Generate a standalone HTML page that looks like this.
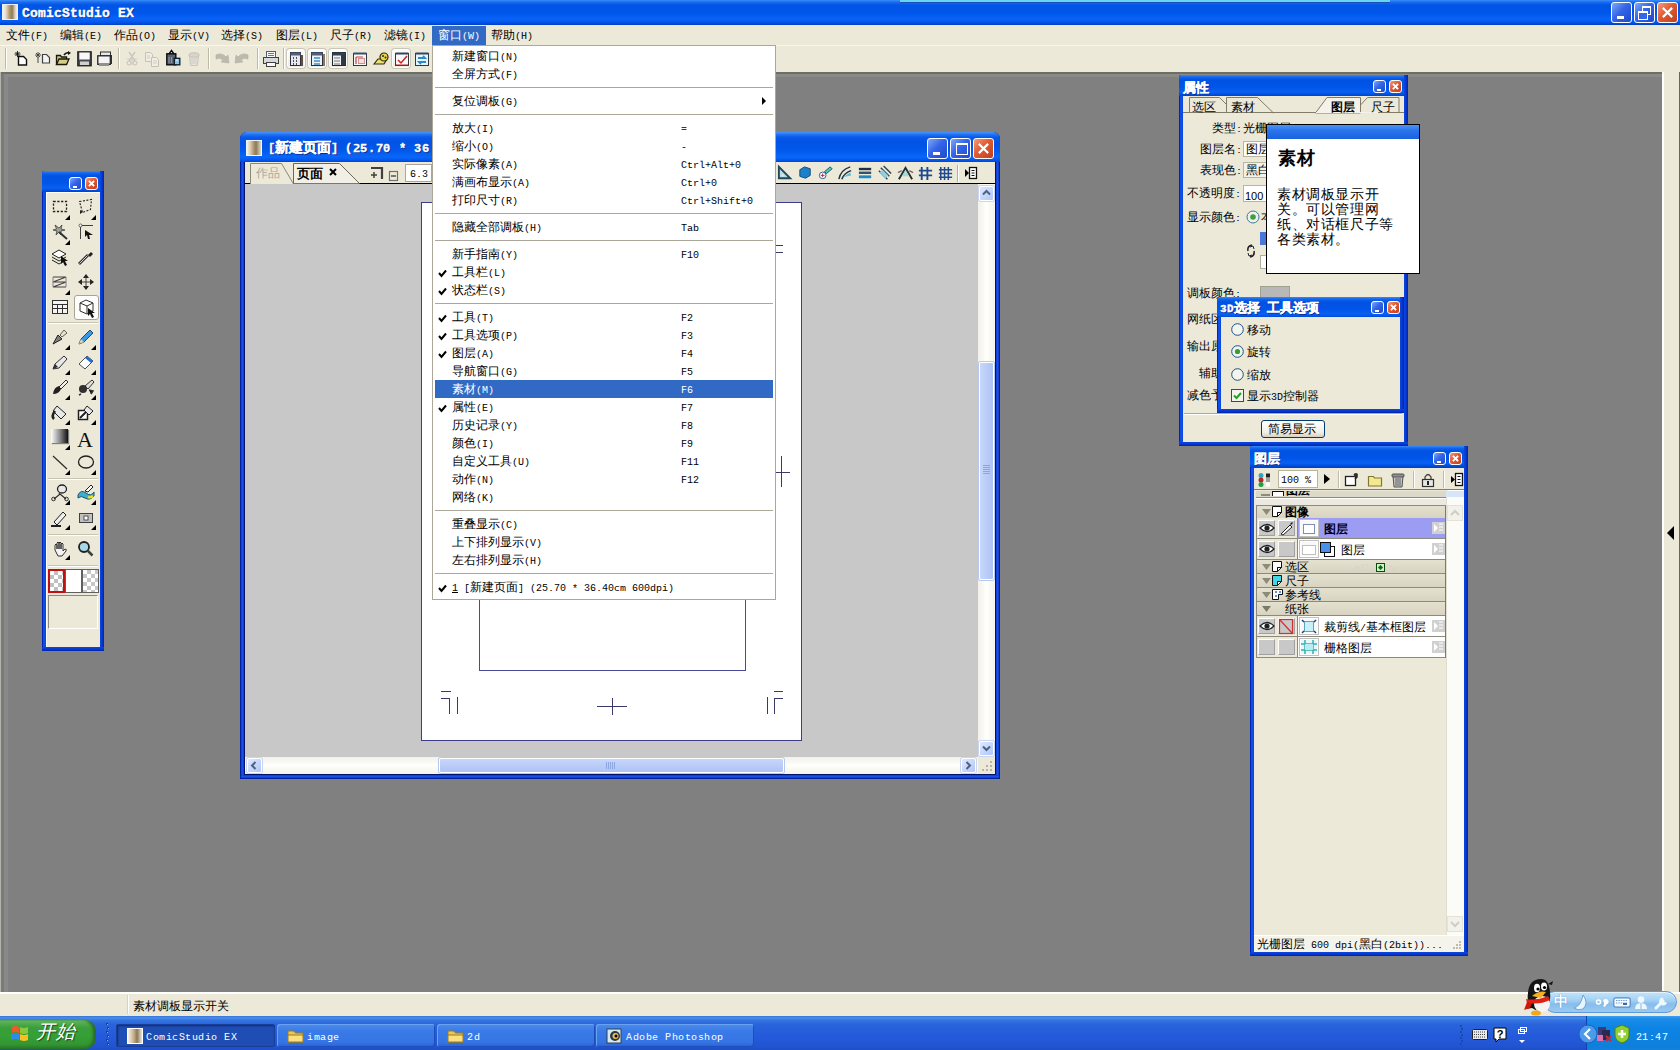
<!DOCTYPE html>
<html><head><meta charset="utf-8"><style>
@font-face{font-family:M;src:local("Liberation Mono");unicode-range:U+0000-00FF;size-adjust:83.33%}
@font-face{font-family:MB;src:local("Liberation Mono Bold");font-weight:bold;unicode-range:U+0000-00FF;size-adjust:83.33%}
html,body{margin:0;padding:0;width:1680px;height:1050px;overflow:hidden;background:#808080}
body{position:relative;font-family:M,"Liberation Sans",sans-serif;font-size:12px;line-height:14px;color:#000}
.a{position:absolute}
svg{position:absolute;overflow:visible}
.bg{background:#ECE9D8}
.ttl{background:linear-gradient(#3D8DF8 0,#1C6DF2 2px,#0055E5 5px,#0056EA 13px,#0A62F6 19px,#0058EE 22px,#003FC4 25px)}
.ptl{background:linear-gradient(#3A8AF6 0,#1466EE 2px,#0052E2 5px,#0055E8 12px,#0A60F4 17px,#0054E6 19px,#0042C8 21px)}
.bb{border-radius:3px;border:1px solid #fff;box-sizing:border-box;background:linear-gradient(135deg,#7FA8FA,#3565E8 45%,#1E48C8)}
.bc{border-radius:3px;border:1px solid #fff;box-sizing:border-box;background:linear-gradient(135deg,#F59A7E,#E05A32 45%,#C04020)}
.w{color:#fff}
.b{font-weight:bold;font-family:MB,"Liberation Sans",sans-serif}
.vs{position:absolute;width:1px;background:#C5C2B2;border-right:1px solid #fff}
.mi{position:absolute;left:19px;height:18px;line-height:18px;white-space:pre}
.sc{position:absolute;left:248px;height:18px;line-height:18px;white-space:pre}
.ms{position:absolute;left:3px;right:3px;height:1px;background:#ACA899}
.pb{position:absolute;box-sizing:border-box;border:1px solid #fff;border-radius:3px;background:linear-gradient(#FDFDFB,#ECEBE4);box-shadow:0 0 0 1px #C9C6B8}
.pr{white-space:pre}
</style></head><body>
<div class="a ttl" style="left:0px;top:0px;width:1680px;height:25px;"></div>
<div class="a " style="left:900px;top:0px;width:490px;height:2px;background:#66D4F2;border-bottom:1px solid #1850B8"></div>
<div class="a " style="left:2px;top:4px;width:16px;height:16px;background:linear-gradient(90deg,#F6F2EC 0,#E8DCC8 20%,#B49C70 45%,#8C7A58 65%,#D8CCB4 85%,#F2EEE6);border:1px solid #E8F0FF;box-sizing:border-box"></div>
<div class="a pr w b" style="left:22px;top:5px;font-size:16px;line-height:17px;letter-spacing:0;text-shadow:1px 1px 0 #0A2A90;-webkit-text-stroke:0.35px #fff">ComicStudio EX</div>
<div class="a bb" style="left:1611px;top:2px;width:21px;height:21px;"><div class="a" style="left:5px;top:13px;width:7px;height:3px;background:#fff"></div></div>
<div class="a bb" style="left:1634px;top:2px;width:21px;height:21px;"><div class="a" style="left:7px;top:3px;width:7px;height:6px;border:1px solid #fff;border-top-width:2px"></div><div class="a" style="left:3px;top:8px;width:8px;height:6px;border:1px solid #fff;border-top-width:2px;background:#3565E8"></div></div>
<div class="a bc" style="left:1657px;top:2px;width:21px;height:21px;"><svg style="left:0;top:0" width="19" height="19"><path d="M5.67 5.67L13.33 13.33M13.33 5.67L5.67 13.33" stroke="#fff" stroke-width="2.2" stroke-linecap="square"/></svg></div>
<div class="a bg" style="left:0px;top:25px;width:1680px;height:20px;"></div>
<div class="a " style="left:432px;top:26px;width:54px;height:19px;background:#316AC5"></div>
<div class="a pr " style="left:6px;top:30px;">文件(F)</div>
<div class="a pr " style="left:60px;top:30px;">编辑(E)</div>
<div class="a pr " style="left:114px;top:30px;">作品(O)</div>
<div class="a pr " style="left:168px;top:30px;">显示(V)</div>
<div class="a pr " style="left:221px;top:30px;">选择(S)</div>
<div class="a pr " style="left:276px;top:30px;">图层(L)</div>
<div class="a pr " style="left:330px;top:30px;">尺子(R)</div>
<div class="a pr " style="left:384px;top:30px;">滤镜(I)</div>
<div class="a pr " style="left:491px;top:30px;">帮助(H)</div>
<div class="a pr " style="left:438px;top:30px;color:#fff">窗口(W)</div>
<div class="a bg" style="left:0px;top:45px;width:1680px;height:27px;border-top:1px solid #F8F6EE;box-sizing:border-box"></div>
<div class="a " style="left:5px;top:48px;width:1px;height:21px;background:#BDBAAA;border-right:1px solid #fff"></div>
<div class="a " style="left:118px;top:48px;width:1px;height:21px;background:#BDBAAA;border-right:1px solid #fff"></div>
<div class="a " style="left:208px;top:48px;width:1px;height:21px;background:#BDBAAA;border-right:1px solid #fff"></div>
<div class="a " style="left:257px;top:48px;width:1px;height:21px;background:#BDBAAA;border-right:1px solid #fff"></div>
<div class="a " style="left:283px;top:48px;width:1px;height:21px;background:#BDBAAA;border-right:1px solid #fff"></div>
<svg style="left:13px;top:50px" width="16" height="17" viewBox="0 0 16 17"><path d="M5.5 6.5h5l3 3v5.5h-8z" fill="#fff" stroke="#101010" stroke-width="1.4"/><path d="M1.5 4h6M4.5 1v6M2.5 2l4 4M6.5 2l-4 4" stroke="#101010" stroke-width="0.9"/></svg>
<svg style="left:34px;top:50px" width="16" height="17" viewBox="0 0 16 17"><path d="M8.5 4.5h4l3 3v5.5h-7z" fill="#F4F4F4" stroke="#404040" stroke-width="1.2"/><path d="M1 5h6M4 2v6M2 3l4 4M6 3l-4 4" stroke="#404040" stroke-width="0.9"/><path d="M4 7v6" stroke="#606060" stroke-width="1.2"/></svg>
<svg style="left:55px;top:50px" width="17" height="17" viewBox="0 0 17 17"><path d="M1.5 5.5h4l1 1.5h5v7h-10z" fill="#C8C080" stroke="#1A1A08" stroke-width="1.3"/><path d="M1.5 14.5l2.5-5.5h10l-2.5 5.5z" fill="#D4CC88" stroke="#1A1A08" stroke-width="1.3"/><path d="M9 5q2-3 5-2" stroke="#101010" stroke-width="1.6" fill="none"/><path d="M13 1l3 2-3 2z" fill="#101010"/></svg>
<svg style="left:77px;top:51px" width="15" height="16" viewBox="0 0 15 16"><rect x="0.8" y="0.8" width="13.4" height="14" fill="#4A4A52" stroke="#1A1A1A" stroke-width="1.2"/><rect x="2.3" y="1.5" width="10.4" height="7" fill="#F8F8F8"/><rect x="3" y="10.5" width="9" height="3.5" fill="#D0D0D0"/></svg>
<svg style="left:97px;top:51px" width="15" height="16" viewBox="0 0 15 16"><rect x="3.5" y="1" width="10" height="4" fill="#E8E8E8" stroke="#303030"/><rect x="0.8" y="4.8" width="12.5" height="8.5" fill="#F4F4F4" stroke="#202020" stroke-width="1.3"/><rect x="13" y="4" width="2" height="9" fill="#303030"/><rect x="2" y="12" width="10" height="3" fill="#909090"/></svg>
<svg style="left:126px;top:51px" width="12" height="15" viewBox="0 0 12 15"><path d="M3 1l6 9M9 1L3 10" stroke="#C8C6BC" stroke-width="1.4"/><path d="M1 8h10M6 4v10" stroke="#D0CEC4" stroke-width="1.2"/><circle cx="3" cy="12" r="2" fill="none" stroke="#C4C2B8"/><circle cx="9" cy="12" r="2" fill="none" stroke="#C4C2B8"/></svg>
<svg style="left:144px;top:51px" width="16" height="16" viewBox="0 0 16 16"><path d="M1.5 1.5h5l2 2v7h-7z" fill="#F0EEE4" stroke="#C4C2B4"/><path d="M7.5 6.5h5l2 2v7h-7z" fill="#F0EEE4" stroke="#C4C2B4"/><path d="M3 5h3M3 7h3M9 10h4M9 12h4" stroke="#D0CEC2"/></svg>
<svg style="left:166px;top:50px" width="15" height="16" viewBox="0 0 15 16"><rect x="0.8" y="3.8" width="9" height="11" fill="#5A6470" stroke="#0A0A10" stroke-width="1.4"/><path d="M3 4l2.5-3.5L8 4" fill="none" stroke="#0A0A10" stroke-width="1.4"/><path d="M3 7v6M5.5 7v6" stroke="#9AA4B0" stroke-width="0.8"/><rect x="8.3" y="8.3" width="5.5" height="6.5" fill="#8CC4E8" stroke="#0A1A28" stroke-width="1.3"/><path d="M10 10h2" stroke="#fff"/></svg>
<svg style="left:187px;top:51px" width="14" height="15" viewBox="0 0 14 15"><path d="M2.5 4.5h9l-1 10h-7z" fill="#E4E2D8" stroke="#C8C6BA"/><ellipse cx="7" cy="4" rx="5" ry="2.2" fill="#D8D6CC" stroke="#C4C2B6"/><path d="M5 6v7M7 6v7M9 6v7" stroke="#D0CEC4"/></svg>
<svg style="left:215px;top:52px" width="15" height="13" viewBox="0 0 15 13"><path d="M1 3q6-3 10 2l2-2 1 8-8-1 2-2q-3-3-7-1z" fill="#BCBAAE" stroke="#B0AE9F" stroke-width="0.6"/></svg>
<svg style="left:234px;top:52px" width="15" height="13" viewBox="0 0 15 13"><path d="M14 3q-6-3-10 2l-2-2-1 8 8-1-2-2q3-3 7-1z" fill="#BCBAAE" stroke="#B0AE9F" stroke-width="0.6"/></svg>
<svg style="left:262px;top:50px" width="18" height="18" viewBox="0 0 18 18"><rect x="4.5" y="1.5" width="9" height="6" fill="#F8F8F8" stroke="#506070"/><path d="M6 3.5h6M6 5.5h6" stroke="#4080C0"/><rect x="1.5" y="7.5" width="15" height="6" fill="#D8D8D8" stroke="#404040"/><rect x="4.5" y="12.5" width="9" height="4" fill="#F8F8F8" stroke="#404040"/></svg>
<div class="pb" style="left:287px;top:49px;width:18px;height:19px"></div>
<div class="pb" style="left:308px;top:49px;width:18px;height:19px"></div>
<div class="pb" style="left:329px;top:49px;width:18px;height:19px"></div>
<div class="pb" style="left:392px;top:49px;width:18px;height:19px"></div>
<svg style="left:289px;top:51px" width="16" height="16" viewBox="0 0 16 16"><rect x="1.5" y="1.5" width="10" height="13" fill="#E8E8F0" stroke="#303040"/><rect x="1.5" y="1.5" width="10" height="3" fill="#506078"/><path d="M4 7h1M7 7h1M4 10h1M7 10h1M4 13h1M7 13h1" stroke="#202020" stroke-width="1.5"/><path d="M13 4v11" stroke="#605040" stroke-width="2"/></svg>
<svg style="left:310px;top:51px" width="16" height="16" viewBox="0 0 16 16"><rect x="1.5" y="1.5" width="11" height="13" fill="#E8F0F8" stroke="#303040"/><rect x="1.5" y="1.5" width="11" height="3" fill="#506078"/><path d="M4 7h6M4 10h6M4 13h6" stroke="#4A8AC0" stroke-width="1.5"/><path d="M14 3v12" stroke="#605040" stroke-width="1.5"/></svg>
<svg style="left:331px;top:51px" width="16" height="16" viewBox="0 0 16 16"><rect x="1.5" y="1.5" width="13" height="13" fill="#F0F0F0" stroke="#202830"/><rect x="1.5" y="1.5" width="13" height="3" fill="#304050"/><rect x="10" y="4" width="4.5" height="10" fill="#303840"/><path d="M3 7h6M3 10h6M3 13h6" stroke="#707880" stroke-width="1.2"/></svg>
<svg style="left:352px;top:51px" width="16" height="16" viewBox="0 0 16 16"><rect x="1.5" y="2.5" width="13" height="12" fill="#F8F8F8" stroke="#303840"/><rect x="1.5" y="1.5" width="13" height="2" fill="#305070"/><path d="M4 6v7M4 6h7" stroke="#C04040" stroke-width="1.2"/><rect x="6.5" y="7.5" width="6" height="5" fill="#F0E0E0" stroke="#D09090"/></svg>
<svg style="left:372px;top:50px" width="18" height="18" viewBox="0 0 18 18"><path d="M2 14l4-5h9l-3 5z" fill="#E8E070" stroke="#302810" stroke-width="1.2"/><circle cx="12" cy="7" r="4" fill="#E8D850" stroke="#302810" stroke-width="1.2"/><circle cx="11" cy="6" r="1" fill="#302810"/><circle cx="13.5" cy="7.5" r="1" fill="#302810"/></svg>
<svg style="left:394px;top:51px" width="16" height="16" viewBox="0 0 16 16"><rect x="1.5" y="2.5" width="13" height="12" fill="#F8F8F8" stroke="#303840"/><rect x="1.5" y="1.5" width="13" height="2" fill="#304860"/><path d="M4 9l3 3 6-7" stroke="#D02020" stroke-width="1.5" fill="none"/><path d="M2 14h12" stroke="#C02020"/></svg>
<svg style="left:414px;top:51px" width="16" height="16" viewBox="0 0 16 16"><rect x="1.5" y="2.5" width="13" height="12" fill="#E8F4FC" stroke="#303840"/><rect x="1.5" y="1.5" width="13" height="2" fill="#304860"/><path d="M4 7h7l-2-2M12 11H5l2 2" stroke="#2A8AD0" stroke-width="1.8" fill="none"/></svg>
<div class="a " style="left:0px;top:72px;width:1662px;height:2px;background:#6E6E66"></div>
<div class="a " style="left:0px;top:74px;width:1662px;height:3px;background:#8A8A86"></div>
<div class="a " style="left:0px;top:72px;width:1px;height:920px;background:#B4B4AC"></div>
<div class="a " style="left:1px;top:74px;width:3px;height:918px;background:#7A7A78"></div>
<div class="a " style="left:4px;top:77px;width:4px;height:915px;background:#898987"></div>
<div class="a bg" style="left:1662px;top:72px;width:18px;height:920px;border-left:2px solid #fff;box-sizing:border-box"></div>
<div class="a " style="left:1679px;top:72px;width:1px;height:920px;background:#66665E"></div>
<div class="a " style="left:1667px;top:526px;width:0px;height:0px;border-right:7px solid #000;border-top:7px solid transparent;border-bottom:7px solid transparent"></div>
<div class="a bg" style="left:0px;top:992px;width:1680px;height:24px;border-top:2px solid #FFFFFF;box-sizing:border-box"></div>
<div class="a " style="left:127px;top:995px;width:1px;height:19px;background:#fff;border-left:1px solid #D6D2C2"></div>
<div class="a pr " style="left:133px;top:1001px;">素材调板显示开关</div>
<div class="a " style="left:0px;top:1016px;width:1680px;height:34px;background:linear-gradient(#3A72D8 0,#4A8FE8 2px,#3476E2 4px,#2A64DC 8px,#245ADA 20px,#2154D2 30px,#1E4EC4 34px)"></div>
<div class="a " style="left:0px;top:1020px;width:96px;height:29px;border-radius:0 11px 11px 0;background:linear-gradient(#7CC47C 0,#52AE52 3px,#3A9E3A 8px,#35A035 16px,#339633 24px,#2A7A2A 29px);box-shadow:inset -3px 0 3px #2A6A2A"></div>
<svg style="left:9px;top:1023px" width="22" height="22" viewBox="0 0 22 22"><path d="M3 4q3-2 7 0v6q-4-2-7 0z" fill="#F05A28"/><path d="M11 4q4 2 8 0v6q-4 2-8 0z" fill="#8CC83C"/><path d="M2 11q4-2 8 0v6q-4-2-8 0z" fill="#2C8CE8"/><path d="M11 11q4 2 8 0v6q-4 2-8 0z" fill="#F8C020"/></svg>
<div class="a pr w" style="left:36px;top:1022px;font-size:19px;line-height:24px;font-style:italic;letter-spacing:1px;text-shadow:1px 1px 1px #1A4A1A">开始</div>
<svg style="left:105px;top:1023px" width="6" height="24" viewBox="0 0 6 24"><rect x="1" y="0" width="2" height="2" fill="#163C9A"/><rect x="2" y="1" width="1" height="1" fill="#7FB0F8"/><rect x="2" y="4" width="2" height="2" fill="#163C9A"/><rect x="3" y="5" width="1" height="1" fill="#7FB0F8"/><rect x="1" y="8" width="2" height="2" fill="#163C9A"/><rect x="2" y="9" width="1" height="1" fill="#7FB0F8"/><rect x="2" y="12" width="2" height="2" fill="#163C9A"/><rect x="3" y="13" width="1" height="1" fill="#7FB0F8"/><rect x="1" y="16" width="2" height="2" fill="#163C9A"/><rect x="2" y="17" width="1" height="1" fill="#7FB0F8"/><rect x="2" y="20" width="2" height="2" fill="#163C9A"/><rect x="3" y="21" width="1" height="1" fill="#7FB0F8"/></svg>
<div class="a " style="left:116px;top:1024px;width:159px;height:23px;border-radius:2px;background:#1E4EB4;box-shadow:inset 1px 1px 2px #0C2A7A;border:1px solid #1A3E96;box-sizing:border-box"></div>
<div class="a " style="left:127px;top:1028px;width:16px;height:16px;background:linear-gradient(90deg,#F6F2EC,#C8B08A 40%,#8A7858 65%,#EDE8DC);border:1px solid #fff;box-sizing:border-box"></div>
<div class="a pr w" style="left:146px;top:1031px;font-size:12px;line-height:14px;letter-spacing:0.5px">ComicStudio EX</div>
<div class="a " style="left:277px;top:1024px;width:158px;height:23px;border-radius:3px;background:linear-gradient(#4C8CEC,#3A7BE8 30%,#3474E4 80%,#2A62D0);box-shadow:inset 1px 1px 0 #6AA2F2,inset -1px -1px 0 #1E4EBA"></div>
<svg style="left:287px;top:1028px" width="18" height="16" viewBox="0 0 18 16"><path d="M1 3h6l1.5 2H16v9H1z" fill="#E8C850" stroke="#9A7A20" stroke-width="1"/><path d="M1 7h15v7H1z" fill="#F8E080" stroke="#9A7A20" stroke-width="1"/></svg>
<div class="a pr w" style="left:307px;top:1031px;font-size:12px;line-height:14px;letter-spacing:0.5px">image</div>
<div class="a " style="left:437px;top:1024px;width:158px;height:23px;border-radius:3px;background:linear-gradient(#4C8CEC,#3A7BE8 30%,#3474E4 80%,#2A62D0);box-shadow:inset 1px 1px 0 #6AA2F2,inset -1px -1px 0 #1E4EBA"></div>
<svg style="left:447px;top:1028px" width="18" height="16" viewBox="0 0 18 16"><path d="M1 3h6l1.5 2H16v9H1z" fill="#E8C850" stroke="#9A7A20" stroke-width="1"/><path d="M1 7h15v7H1z" fill="#F8E080" stroke="#9A7A20" stroke-width="1"/></svg>
<div class="a pr w" style="left:467px;top:1031px;font-size:12px;line-height:14px;letter-spacing:0.5px">2d</div>
<div class="a " style="left:596px;top:1024px;width:158px;height:23px;border-radius:3px;background:linear-gradient(#4C8CEC,#3A7BE8 30%,#3474E4 80%,#2A62D0);box-shadow:inset 1px 1px 0 #6AA2F2,inset -1px -1px 0 #1E4EBA"></div>
<svg style="left:606px;top:1028px" width="16" height="16" viewBox="0 0 16 16"><rect x="1" y="1" width="14" height="14" fill="#D8E8F0" stroke="#304050"/><circle cx="9" cy="8" r="5" fill="#2A3A4A"/><circle cx="9.5" cy="8" r="3" fill="#F0C040"/><circle cx="10" cy="8" r="1.5" fill="#000"/></svg>
<div class="a pr w" style="left:626px;top:1031px;font-size:12px;line-height:14px;letter-spacing:0.5px">Adobe Photoshop</div>
<div class="a " style="left:1586px;top:1016px;width:94px;height:34px;background:linear-gradient(#3AA0F0 0,#1C8CE8 3px,#0C84E4 12px,#0F7FDC 30px,#1480D8 34px);border-left:1px solid #1042AF"></div>
<svg style="left:1578px;top:1024px" width="20" height="20" viewBox="0 0 20 20"><circle cx="10" cy="10" r="9" fill="#4C9AE8" stroke="#2060C0"/><path d="M12 5l-5 5 5 5" stroke="#fff" stroke-width="2.2" fill="none"/></svg>
<svg style="left:1595px;top:1025px" width="18" height="18" viewBox="0 0 18 18"><rect x="3" y="2" width="8" height="10" fill="#3A3A7A"/><rect x="7" y="5" width="8" height="10" fill="#2A2A50"/><path d="M2 10h6v6H2z" fill="#E070B0"/><path d="M11 11l5 5M16 11l-5 5" stroke="#E02020" stroke-width="2"/></svg>
<svg style="left:1614px;top:1024px" width="16" height="20" viewBox="0 0 16 20"><path d="M8 1l7 3v7q0 6-7 8q-7-2-7-8V4z" fill="#90D030" stroke="#508018"/><path d="M8 6v8M4 10h8" stroke="#fff" stroke-width="2.5"/></svg>
<div class="a pr w" style="left:1636px;top:1031px;font-size:12px;letter-spacing:0.4px">21:47</div>
<svg style="left:1472px;top:1029px" width="16" height="12" viewBox="0 0 16 12"><rect x="0.5" y="0.5" width="15" height="10" rx="1" fill="#E8E8F0" stroke="#202020"/><path d="M2 3h12M2 5.5h12M2 8h12" stroke="#404040" stroke-dasharray="1 1"/></svg>
<svg style="left:1493px;top:1027px" width="14" height="16" viewBox="0 0 14 16"><path d="M1 1h12v11H6l-3 3v-3H1z" fill="#fff" stroke="#000"/><text x="7" y="11" font-size="11" font-weight="bold" text-anchor="middle" font-family="Liberation Sans">?</text></svg>
<svg style="left:1516px;top:1026px" width="12" height="20" viewBox="0 0 12 20"><rect x="2.5" y="3.5" width="6" height="4" fill="none" stroke="#fff"/><rect x="4.5" y="1.5" width="6" height="4" fill="none" stroke="#fff"/><path d="M3 14h6l-3 3z" fill="#fff"/></svg>
<svg style="left:1460px;top:1025px" width="4" height="20" viewBox="0 0 4 20"><rect x="0" y="0" width="2" height="2" fill="#1A4AB0"/><rect x="1" y="3" width="2" height="2" fill="#1A4AB0"/><rect x="0" y="6" width="2" height="2" fill="#1A4AB0"/><rect x="1" y="9" width="2" height="2" fill="#1A4AB0"/><rect x="0" y="12" width="2" height="2" fill="#1A4AB0"/><rect x="1" y="15" width="2" height="2" fill="#1A4AB0"/><rect x="0" y="18" width="2" height="2" fill="#1A4AB0"/></svg>
<div class="a " style="left:1544px;top:991px;width:133px;height:22px;border-radius:11px;background:linear-gradient(#C4E4FA 0,#A4D2F4 40%,#86BEEC 60%,#9ACAF0 100%);border:1px solid #5E9AD8;box-sizing:border-box;box-shadow:inset 0 1px 0 #E4F4FF"></div>
<svg style="left:1522px;top:977px" width="40" height="40" viewBox="0 0 40 40"><path d="M19 2q-12 0-13 14q-1 6 1 10l-3 6 6-1q5 4 12 2l4-4q3-6 2-14q-1-13-9-13z" fill="#151515"/><ellipse cx="20" cy="27" rx="8" ry="8" fill="#F4F4F4"/><ellipse cx="15" cy="11" rx="3" ry="4.2" fill="#fff"/><ellipse cx="22" cy="9.5" rx="3" ry="4" fill="#fff"/><circle cx="16" cy="12" r="1.6" fill="#000"/><circle cx="22.5" cy="10.5" r="1.6" fill="#000"/><path d="M10 19q7-6 14-4l-5 6z" fill="#F4B020"/><path d="M4 22q10 2 22-3l2 4q-10 5-23 3z" fill="#E02010"/><path d="M5 25l-3 8 6-2 2-5z" fill="#D01808"/><ellipse cx="14" cy="36" rx="5" ry="2.6" fill="#F4A818"/><path d="M26 7l5-3-1 4z" fill="#151515"/></svg>
<div class="a pr w" style="left:1554px;top:995px;font-size:14px;line-height:16px;font-weight:bold;text-shadow:0 0 1px #3A78C0">中</div>
<svg style="left:1574px;top:995px" width="15" height="15" viewBox="0 0 15 15"><path d="M9 0q6 8 0 14q-5 2-9-1q7-2 9-13z" fill="#EAF6FF" stroke="#4A88C8" stroke-width="0.7"/></svg>
<svg style="left:1596px;top:999px" width="12" height="8" viewBox="0 0 12 8"><circle cx="2.5" cy="3" r="2" fill="none" stroke="#fff" stroke-width="1.5"/><path d="M8 2.5a1.8 1.8 0 1 1 2 2l-2 3" stroke="#fff" stroke-width="2" fill="#fff"/></svg>
<svg style="left:1613px;top:997px" width="18" height="11" viewBox="0 0 18 11"><rect x="0.8" y="0.8" width="16.4" height="9.4" rx="2" fill="#F4FAFF" stroke="#5A8AC0" stroke-width="1.2"/><path d="M3 3.5h12M3 6h12" stroke="#6A9AD0" stroke-width="1.2" stroke-dasharray="1.4 1"/><rect x="10" y="6" width="4" height="2" fill="#3A6AA0"/></svg>
<svg style="left:1635px;top:996px" width="12" height="13" viewBox="0 0 12 13"><circle cx="6" cy="3.6" r="3.3" fill="#EEF8FF"/><path d="M0 13q0-6 6-6t6 6z" fill="#EEF8FF"/><path d="M6 7v6" stroke="#8AB8E0"/></svg>
<svg style="left:1654px;top:996px" width="15" height="13" viewBox="0 0 15 13"><path d="M2 12l7-7" stroke="#EEF8FF" stroke-width="3" stroke-linecap="round"/><path d="M9 1.5a4 4 0 1 0 4 5l-2.5-.5-1-2z" fill="#EEF8FF"/></svg>
<div class="a " style="left:240px;top:132px;width:760px;height:647px;border-radius:7px 7px 0 0;background:#0A3CCC;box-shadow:inset 0 0 0 1px #0022A0"></div>
<div class="a " style="left:241px;top:160px;width:3px;height:618px;background:linear-gradient(90deg,#0E3CD4,#1A50E4 50%,#0E38C8)"></div>
<div class="a " style="left:996px;top:160px;width:3px;height:618px;background:linear-gradient(90deg,#0E3CD4,#1A50E4 50%,#0E38C8)"></div>
<div class="a " style="left:241px;top:775px;width:758px;height:3px;background:linear-gradient(#0E3CD4,#1A50E4 50%,#0E38C8)"></div>
<div class="a " style="left:244px;top:161px;width:752px;height:614px;border:1px solid #00126A;border-top:none;box-sizing:border-box"></div>
<div class="a ttl2" style="left:240px;top:132px;width:760px;height:30px;border-radius:7px 7px 0 0"></div>
<style>.ttl2{background:linear-gradient(#4A96FA 0,#2A78F4 2px,#0A5AEC 5px,#0053E4 10px,#0058EC 18px,#0A66F8 25px,#0058EE 28px,#0045D0 30px)}</style>
<div class="a " style="left:246px;top:140px;width:16px;height:16px;background:linear-gradient(90deg,#F6F2EC,#D8C8A8 25%,#A89070 50%,#8C7A58 65%,#E0D8C4);border:1px solid #F0F4FF;box-sizing:border-box"></div>
<div class="a pr w b" style="left:268px;top:141px;font-size:14px;line-height:16px;text-shadow:1px 1px 0 #0A2A90;-webkit-text-stroke:0.35px #fff">[新建页面] <span style="letter-spacing:0.7px">(25.70 * 36</span></div>
<div class="a bb" style="left:927px;top:138px;width:21px;height:21px;"><div class="a" style="left:5px;top:13px;width:7px;height:3px;background:#fff"></div></div>
<div class="a bb" style="left:950px;top:138px;width:21px;height:21px;"><div class="a" style="left:5px;top:4px;width:10px;height:9px;border:1px solid #fff;border-top-width:2px"></div></div>
<div class="a bc" style="left:973px;top:138px;width:21px;height:21px;"><svg style="left:0;top:0" width="19" height="19"><path d="M5.67 5.67L13.33 13.33M13.33 5.67L5.67 13.33" stroke="#fff" stroke-width="2.2" stroke-linecap="square"/></svg></div>
<div class="a " style="left:245px;top:162px;width:750px;height:612px;background:#C8C8C8"></div>
<div class="a bg" style="left:245px;top:162px;width:750px;height:22px;border-bottom:1px solid #000;box-sizing:border-box"></div>
<svg style="left:245px;top:162px" width="140" height="22" viewBox="0 0 140 22"><path d="M5.5 22V1.5h31l12 20.5" fill="#ECE9D8" stroke="#8A8878"/><path d="M48.5 21.5V1.5h46l20 20" fill="#F2F0E6" stroke="#6A6858"/></svg>
<div class="a pr " style="left:256px;top:168px;color:#ACA899">作品</div>
<div class="a pr " style="left:297px;top:168px;font-weight:bold;font-size:13px">页面</div>
<svg style="left:328px;top:167px" width="10" height="10" viewBox="0 0 10 10"><path d="M2 2l6 6M8 2l-6 6" stroke="#000" stroke-width="2"/></svg>
<svg style="left:368px;top:166px" width="20" height="16" viewBox="0 0 20 16"><path d="M3 2h11v11" stroke="#404040" stroke-width="2.2" fill="none"/><path d="M3 9h6M6 6v6" stroke="#404040" stroke-width="1.5"/></svg>
<svg style="left:388px;top:170px" width="12" height="12" viewBox="0 0 12 12"><rect x="1.5" y="1.5" width="8" height="9" fill="none" stroke="#707070" stroke-width="1.2"/><path d="M3 6h5" stroke="#505050" stroke-width="1.5"/></svg>
<div class="a " style="left:405px;top:164px;width:27px;height:18px;background:#fff;border:1px solid #A8A89A;box-sizing:border-box"></div>
<div class="a pr " style="left:410px;top:168px;">6.3</div>
<svg style="left:777px;top:165px" width="17" height="17" viewBox="0 0 18 18"><path d="M2 2v12h12z" fill="#B8DCE8" stroke="#204A5A" stroke-width="2"/><path d="M5 9v3h3z" fill="#ECE9D8"/></svg>
<svg style="left:797px;top:165px" width="17" height="17" viewBox="0 0 18 18"><path d="M3 5l5-3 6 2v7l-5 3-6-2z" fill="#1E80C8" stroke="#0A4A80"/></svg>
<svg style="left:817px;top:165px" width="17" height="17" viewBox="0 0 18 18"><circle cx="6" cy="11" r="3.5" fill="#fff" stroke="#2060A0"/><path d="M6 9v4M4 11h4" stroke="#C02040"/><path d="M8 7l6-5 2 2-6 5z" fill="#50C8C0" stroke="#205050"/></svg>
<svg style="left:837px;top:165px" width="17" height="17" viewBox="0 0 18 18"><path d="M2 15q2-10 12-13M5 15q3-7 10-9" stroke="#203040" stroke-width="1.5" fill="none"/><path d="M6 13l8-5 1 3z" fill="#60C0E0"/></svg>
<svg style="left:857px;top:165px" width="17" height="17" viewBox="0 0 18 18"><rect x="2" y="3" width="13" height="2.5" fill="#203040"/><rect x="2" y="7" width="13" height="2.5" fill="#305070"/><rect x="2" y="11" width="13" height="3" fill="#1E88C8"/></svg>
<svg style="left:877px;top:165px" width="17" height="17" viewBox="0 0 18 18"><path d="M2 6l9 9M4 3l9 9M7 1l8 8" stroke="#304050" stroke-width="1.5"/><path d="M3 8l6 6 3-3-6-6z" fill="#90D0E0"/></svg>
<svg style="left:897px;top:165px" width="17" height="17" viewBox="0 0 18 18"><path d="M2 15L9 3l7 12" stroke="#203030" stroke-width="2" fill="none"/><path d="M5 12h8l-4-6z" fill="#A0D8E0"/><path d="M1 8l4-2M17 8l-4-2" stroke="#806070" stroke-width="1.5"/></svg>
<svg style="left:917px;top:165px" width="17" height="17" viewBox="0 0 18 18"><path d="M5 2v14M11 2v14M2 6h14M2 11h14" stroke="#1E4A90" stroke-width="2"/></svg>
<svg style="left:937px;top:165px" width="17" height="17" viewBox="0 0 18 18"><path d="M4 2v14M8 2v14M12 2v14M2 5h14M2 9h14M2 13h14" stroke="#1E4A90" stroke-width="1.6"/></svg>
<div class="a " style="left:957px;top:165px;width:1px;height:17px;background:#B0AEA0;border-right:1px solid #fff"></div>
<svg style="left:963px;top:165px" width="16" height="16" viewBox="0 0 16 16"><rect x="6.5" y="2.5" width="7" height="11" fill="#fff" stroke="#101010" stroke-width="1.3"/><path d="M8.5 5.5h3M8.5 8h3M8.5 10.5h3" stroke="#101010"/><path d="M2 4l4 4-4 4z" fill="#000"/></svg>
<div class="a " style="left:421px;top:202px;width:381px;height:539px;background:#fff;border:1px solid #3C3C8C;box-sizing:border-box"></div>
<div class="a " style="left:479px;top:262px;width:267px;height:409px;border:1px solid #4A4A9A;box-sizing:border-box"></div>
<div class="a " style="left:441px;top:691px;width:10px;height:1px;background:#3A3A6A"></div>
<div class="a " style="left:441px;top:698px;width:9px;height:1px;background:#3A3A6A"></div>
<div class="a " style="left:449px;top:698px;width:1px;height:16px;background:#3A3A6A"></div>
<div class="a " style="left:457px;top:697px;width:1px;height:17px;background:#3A3A6A"></div>
<div class="a " style="left:774px;top:691px;width:9px;height:1px;background:#3A3A6A"></div>
<div class="a " style="left:774px;top:698px;width:9px;height:1px;background:#3A3A6A"></div>
<div class="a " style="left:774px;top:698px;width:1px;height:16px;background:#3A3A6A"></div>
<div class="a " style="left:767px;top:697px;width:1px;height:17px;background:#3A3A6A"></div>
<div class="a " style="left:597px;top:706px;width:30px;height:1px;background:#3A3A6A"></div>
<div class="a " style="left:612px;top:698px;width:1px;height:17px;background:#3A3A6A"></div>
<div class="a " style="left:776px;top:245px;width:7px;height:1px;background:#3A3A6A"></div>
<div class="a " style="left:776px;top:252px;width:7px;height:1px;background:#3A3A6A"></div>
<div class="a " style="left:775px;top:472px;width:15px;height:1px;background:#3A3A6A"></div>
<div class="a " style="left:781px;top:456px;width:1px;height:31px;background:#3A3A6A"></div>
<div class="a " style="left:978px;top:184px;width:17px;height:573px;background:linear-gradient(90deg,#F2F1EA,#FEFEFB 50%,#F4F3EC)"></div>
<div class="a " style="left:979px;top:186px;width:15px;height:15px;border-radius:2px;background:linear-gradient(135deg,#E0E8FE,#C2D4FA 60%,#B2C6F4);border:1px solid #fff;box-sizing:border-box;box-shadow:0 0 0 1px #C8D4F0"></div>
<svg style="left:979px;top:186px" width="15" height="15" viewBox="0 0 15 15"><path d="M4 8.5l3.5-3.5 3.5 3.5" stroke="#4D6185" stroke-width="2" fill="none"/></svg>
<div class="a " style="left:979px;top:741px;width:15px;height:15px;border-radius:2px;background:linear-gradient(135deg,#E0E8FE,#C2D4FA 60%,#B2C6F4);border:1px solid #fff;box-sizing:border-box;box-shadow:0 0 0 1px #C8D4F0"></div>
<svg style="left:979px;top:741px" width="15" height="15" viewBox="0 0 15 15"><path d="M4 5.5l3.5 3.5 3.5-3.5" stroke="#4D6185" stroke-width="2" fill="none"/></svg>
<div class="a " style="left:979px;top:362px;width:15px;height:218px;border-radius:2px;background:linear-gradient(90deg,#C8D6FB,#BACCF8 50%,#AFC3F5);border:1px solid #fff;box-sizing:border-box;box-shadow:0 0 0 1px #B8C8EC"></div>
<svg style="left:982px;top:465px" width="10" height="9" viewBox="0 0 10 9"><rect x="1" y="0" width="7" height="1" fill="#8CA6E0"/><rect x="1" y="2" width="7" height="1" fill="#8CA6E0"/><rect x="1" y="4" width="7" height="1" fill="#8CA6E0"/><rect x="1" y="6" width="7" height="1" fill="#8CA6E0"/><rect x="1" y="8" width="7" height="1" fill="#8CA6E0"/></svg>
<div class="a " style="left:245px;top:757px;width:733px;height:17px;background:linear-gradient(#F2F1EA,#FEFEFB 50%,#F4F3EC)"></div>
<div class="a " style="left:247px;top:758px;width:15px;height:15px;border-radius:2px;background:linear-gradient(135deg,#E0E8FE,#C2D4FA 60%,#B2C6F4);border:1px solid #fff;box-sizing:border-box;box-shadow:0 0 0 1px #C8D4F0"></div>
<svg style="left:247px;top:758px" width="15" height="15" viewBox="0 0 15 15"><path d="M8.5 4l-3.5 3.5 3.5 3.5" stroke="#4D6185" stroke-width="2" fill="none"/></svg>
<div class="a " style="left:961px;top:758px;width:15px;height:15px;border-radius:2px;background:linear-gradient(135deg,#E0E8FE,#C2D4FA 60%,#B2C6F4);border:1px solid #fff;box-sizing:border-box;box-shadow:0 0 0 1px #C8D4F0"></div>
<svg style="left:961px;top:758px" width="15" height="15" viewBox="0 0 15 15"><path d="M5.5 4l3.5 3.5-3.5 3.5" stroke="#4D6185" stroke-width="2" fill="none"/></svg>
<div class="a " style="left:439px;top:758px;width:345px;height:15px;border-radius:2px;background:linear-gradient(#C8D6FB,#BACCF8 50%,#AFC3F5);border:1px solid #fff;box-sizing:border-box;box-shadow:0 0 0 1px #B8C8EC"></div>
<svg style="left:606px;top:761px" width="9" height="9" viewBox="0 0 9 9"><rect x="0" y="1" width="1" height="7" fill="#8CA6E0"/><rect x="2" y="1" width="1" height="7" fill="#8CA6E0"/><rect x="4" y="1" width="1" height="7" fill="#8CA6E0"/><rect x="6" y="1" width="1" height="7" fill="#8CA6E0"/><rect x="8" y="1" width="1" height="7" fill="#8CA6E0"/></svg>
<div class="a bg" style="left:978px;top:757px;width:17px;height:17px;"></div>
<svg style="left:980px;top:759px" width="14" height="14" viewBox="0 0 14 14"><rect x="10" y="2" width="2" height="2" fill="#B8B4A2"/><rect x="6" y="6" width="2" height="2" fill="#B8B4A2"/><rect x="10" y="6" width="2" height="2" fill="#B8B4A2"/><rect x="2" y="10" width="2" height="2" fill="#B8B4A2"/><rect x="6" y="10" width="2" height="2" fill="#B8B4A2"/><rect x="10" y="10" width="2" height="2" fill="#B8B4A2"/></svg>
<div class="a " style="left:42px;top:171px;width:62px;height:480px;background:linear-gradient(90deg,#0831D9,#1656E8 2px,#0A48E0 3px);box-shadow:inset 0 0 0 1px #0026B8;border-radius:2px 2px 0 0"></div>
<div class="a ptl" style="left:42px;top:171px;width:62px;height:21px;border-radius:2px 2px 0 0"></div>
<div class="a " style="left:100px;top:171px;width:4px;height:480px;background:linear-gradient(90deg,#0A48E0,#0838D0 2px,#0024A8)"></div>
<div class="a " style="left:42px;top:647px;width:62px;height:4px;background:linear-gradient(#0A48E0,#0838D0 2px,#0024A8)"></div>
<div class="a bb" style="left:69px;top:177px;width:13px;height:13px;"><div class="a" style="left:3px;top:8px;width:4px;height:2px;background:#fff"></div></div>
<div class="a bc" style="left:85px;top:177px;width:13px;height:13px;"><svg style="left:0;top:0" width="11" height="11"><path d="M3.5100000000000002 3.5100000000000002L7.49 7.49M7.49 3.5100000000000002L3.5100000000000002 7.49" stroke="#fff" stroke-width="1.8" stroke-linecap="square"/></svg></div>
<div class="a bg" style="left:46px;top:192px;width:54px;height:455px;box-shadow:inset 1px 1px 0 #fff"></div>
<div class="a " style="left:48px;top:322px;width:50px;height:1px;background:#C8C4B2;border-bottom:1px solid #fff"></div>
<div class="a " style="left:48px;top:478px;width:50px;height:1px;background:#C8C4B2;border-bottom:1px solid #fff"></div>
<div class="a " style="left:48px;top:534px;width:50px;height:1px;background:#C8C4B2;border-bottom:1px solid #fff"></div>
<div class="a " style="left:48px;top:565px;width:50px;height:1px;background:#C8C4B2;border-bottom:1px solid #fff"></div>
<svg style="left:50px;top:197px" width="20" height="20" viewBox="0 0 20 20"><rect x="3.5" y="4.5" width="13" height="10" fill="none" stroke="#202020" stroke-width="1.3" stroke-dasharray="2.2 1.6"/></svg>
<svg style="left:65px;top:215px" width="5" height="5" viewBox="0 0 5 5"><path d="M5 0v5H0z" fill="#000"/></svg>
<svg style="left:76px;top:197px" width="20" height="20" viewBox="0 0 20 20"><path d="M3.5 4.5l12-2-1 10-8 3z" fill="none" stroke="#202020" stroke-width="1.1" stroke-dasharray="2 1.5"/><path d="M4 13l3 2-3 2z" fill="#202020"/></svg>
<svg style="left:91px;top:215px" width="5" height="5" viewBox="0 0 5 5"><path d="M5 0v5H0z" fill="#000"/></svg>
<svg style="left:50px;top:222px" width="20" height="20" viewBox="0 0 20 20"><path d="M5 3l1.5 4L3 8l4 1-1 4 3-3 2 3v-4l4-1-4-1 1-4-3 3z" fill="#A0A098" stroke="#404040" stroke-width="0.8"/><path d="M9 10l8 7" stroke="#303030" stroke-width="2"/></svg>
<svg style="left:65px;top:240px" width="5" height="5" viewBox="0 0 5 5"><path d="M5 0v5H0z" fill="#000"/></svg>
<svg style="left:76px;top:222px" width="20" height="20" viewBox="0 0 20 20"><path d="M4 3.5h13M4.5 3v14" stroke="#404040" stroke-width="1"/><circle cx="4.5" cy="3.5" r="1.5" fill="#fff" stroke="#404040" stroke-width="0.8"/><path d="M9 8l8 5-4 0 1 4-2 0-1-4-2 2z" fill="#111"/></svg>
<svg style="left:50px;top:247px" width="22" height="20" viewBox="0 0 22 20"><path d="M2 7l7-4 7 4-7 4z" fill="#fff" stroke="#202020"/><path d="M2 10l7 4 7-4M2 13l7 4 7-4" fill="none" stroke="#202020"/><path d="M11 9l7 5-3 0 2 4-2 1-2-4-2 2z" fill="#111"/></svg>
<svg style="left:76px;top:247px" width="20" height="20" viewBox="0 0 20 20"><path d="M3 17l9-9" stroke="#303030" stroke-width="2.8"/><path d="M3.5 16.5l8-8" stroke="#D8D8D8" stroke-width="1"/><path d="M12 8l3-3 2 2-3 3z" fill="#202020"/></svg>
<svg style="left:50px;top:272px" width="20" height="20" viewBox="0 0 20 20"><path d="M3 5h13L3 10h13L3 15h13" fill="none" stroke="#404040" stroke-width="1.2"/><path d="M3 5v10M16 5v10" stroke="#808080"/></svg>
<svg style="left:65px;top:290px" width="5" height="5" viewBox="0 0 5 5"><path d="M5 0v5H0z" fill="#000"/></svg>
<svg style="left:76px;top:272px" width="20" height="20" viewBox="0 0 20 20"><path d="M10 2l3 4H7zM10 18l3-4H7zM2 10l4-3v6zM18 10l-4-3v6z" fill="#202020"/><path d="M10 5v10M5 10h10" stroke="#404040" stroke-width="1"/></svg>
<svg style="left:50px;top:297px" width="20" height="20" viewBox="0 0 20 20"><rect x="2.5" y="3.5" width="15" height="13" fill="#F4F4F0" stroke="#303030"/><path d="M2.5 7.5h15M2.5 11.5h15M7.5 7.5v9M12.5 7.5v9" stroke="#303030"/></svg>
<div class="a " style="left:74px;top:295px;width:25px;height:25px;border:1px solid #A8A494;border-radius:3px;background:#FDFDFB;box-sizing:border-box;box-shadow:inset 1px 1px 0 #fff"></div>
<svg style="left:76px;top:297px" width="22" height="22" viewBox="0 0 22 22"><path d="M4 6l6-3 7 3v8l-6 3-7-3z" fill="#fff" stroke="#303030"/><path d="M4 6l7 3 6-3M11 9v8" stroke="#303030" fill="none"/><path d="M12 11l7 5-3 0 2 4-2 1-2-4-2 2z" fill="#111"/></svg>
<svg style="left:50px;top:327px" width="20" height="20" viewBox="0 0 20 20"><path d="M3 17l5-9 4 4z" fill="#808080" stroke="#202020"/><path d="M10 8l4-5 3 3-5 4z" fill="#F0E0C0" stroke="#606050"/></svg>
<svg style="left:65px;top:345px" width="5" height="5" viewBox="0 0 5 5"><path d="M5 0v5H0z" fill="#000"/></svg>
<svg style="left:76px;top:327px" width="20" height="20" viewBox="0 0 20 20"><path d="M3 17l2-5 9-9 3 3-9 9z" fill="#3A9AE0" stroke="#1A4A80"/><path d="M3 17l2-5 3 3z" fill="#E8D0A0"/></svg>
<svg style="left:91px;top:345px" width="5" height="5" viewBox="0 0 5 5"><path d="M5 0v5H0z" fill="#000"/></svg>
<svg style="left:50px;top:352px" width="20" height="20" viewBox="0 0 20 20"><path d="M3 17l2-5 9-8 3 3-8 9z" fill="#E8E8E8" stroke="#303030"/><path d="M3 17l2-5 3 3z" fill="#303030"/></svg>
<svg style="left:65px;top:370px" width="5" height="5" viewBox="0 0 5 5"><path d="M5 0v5H0z" fill="#000"/></svg>
<svg style="left:76px;top:352px" width="20" height="20" viewBox="0 0 20 20"><path d="M3 12l8-8 6 5-8 8z" fill="#fff" stroke="#505050"/><path d="M9 6l2-2 6 5-2 2z" fill="#2A6AD8"/></svg>
<svg style="left:91px;top:370px" width="5" height="5" viewBox="0 0 5 5"><path d="M5 0v5H0z" fill="#000"/></svg>
<svg style="left:50px;top:377px" width="20" height="20" viewBox="0 0 20 20"><path d="M9 10l7-7 2 2-7 7z" fill="#F0F0E8" stroke="#303030"/><path d="M9 9q-5 1-6 8q6 0 8-5z" fill="#202020"/></svg>
<svg style="left:65px;top:395px" width="5" height="5" viewBox="0 0 5 5"><path d="M5 0v5H0z" fill="#000"/></svg>
<svg style="left:76px;top:377px" width="20" height="20" viewBox="0 0 20 20"><path d="M9 9l7-6 2 2-6 7z" fill="#E0E0E0" stroke="#303030"/><circle cx="7" cy="12" r="4" fill="#303030"/><path d="M13 13l4 1-2 3M5 17l-2 1" stroke="#303030" stroke-width="1.5"/></svg>
<svg style="left:91px;top:395px" width="5" height="5" viewBox="0 0 5 5"><path d="M5 0v5H0z" fill="#000"/></svg>
<svg style="left:50px;top:402px" width="20" height="20" viewBox="0 0 20 20"><path d="M7 4l9 8-5 5-8-8z" fill="#E8E8E8" stroke="#202020"/><path d="M5 9q-4 5-1 8" stroke="#202020" stroke-width="2.5" fill="none"/></svg>
<svg style="left:65px;top:420px" width="5" height="5" viewBox="0 0 5 5"><path d="M5 0v5H0z" fill="#000"/></svg>
<svg style="left:76px;top:402px" width="20" height="20" viewBox="0 0 20 20"><rect x="2.5" y="8.5" width="9" height="9" fill="#fff" stroke="#202020" stroke-width="1.5"/><path d="M4 16l6-6" stroke="#202020" stroke-width="2"/><path d="M11 4l6 5-4 4-5-5z" fill="#E8E8E8" stroke="#202020"/></svg>
<svg style="left:91px;top:420px" width="5" height="5" viewBox="0 0 5 5"><path d="M5 0v5H0z" fill="#000"/></svg>
<div class="a" style="left:51px;top:429px;width:17px;height:14px;background:linear-gradient(90deg,#fff,#909090 50%,#101010);box-shadow:1px 1px 1px #808080"></div>
<svg style="left:65px;top:445px" width="5" height="5" viewBox="0 0 5 5"><path d="M5 0v5H0z" fill="#000"/></svg>
<div class="a pr " style="left:77px;top:429px;font-family:Liberation Serif,serif;font-size:22px;line-height:22px;color:#101010">A</div>
<svg style="left:50px;top:452px" width="20" height="20" viewBox="0 0 20 20"><path d="M3 4l14 13" stroke="#303030" stroke-width="1.3"/></svg>
<svg style="left:65px;top:470px" width="5" height="5" viewBox="0 0 5 5"><path d="M5 0v5H0z" fill="#000"/></svg>
<svg style="left:76px;top:452px" width="20" height="20" viewBox="0 0 20 20"><ellipse cx="10" cy="10" rx="7.5" ry="6" fill="none" stroke="#202020" stroke-width="1.3"/></svg>
<svg style="left:91px;top:470px" width="5" height="5" viewBox="0 0 5 5"><path d="M5 0v5H0z" fill="#000"/></svg>
<svg style="left:50px;top:483px" width="20" height="20" viewBox="0 0 20 20"><path d="M4 16l6-5 6 5" stroke="#303030" stroke-width="1.2" fill="none"/><circle cx="3.5" cy="16" r="1.8" fill="none" stroke="#303030"/><circle cx="16.5" cy="16" r="1.8" fill="none" stroke="#303030"/><ellipse cx="12" cy="6" rx="4.5" ry="4" fill="#E8E8E8" stroke="#202020" stroke-width="1.3"/><path d="M9 10l1 2" stroke="#202020"/></svg>
<svg style="left:65px;top:500px" width="5" height="5" viewBox="0 0 5 5"><path d="M5 0v5H0z" fill="#000"/></svg>
<svg style="left:76px;top:483px" width="20" height="20" viewBox="0 0 20 20"><path d="M2 12q3-6 8-2q5 4 8-1v4q-4 5-9 2q-4-3-7 0z" fill="#38B0D0" stroke="#205070"/><path d="M12 14q3 1 5-1" stroke="#E8E020" stroke-width="2.5"/><path d="M9 8l6-6 2 2-5 5z" fill="#fff" stroke="#202020"/></svg>
<svg style="left:91px;top:500px" width="5" height="5" viewBox="0 0 5 5"><path d="M5 0v5H0z" fill="#000"/></svg>
<svg style="left:50px;top:508px" width="20" height="20" viewBox="0 0 20 20"><path d="M4 14l9-10 3 3-9 10z" fill="#F0F0F0" stroke="#202020"/><path d="M1 18h10" stroke="#202020" stroke-width="2"/></svg>
<svg style="left:65px;top:525px" width="5" height="5" viewBox="0 0 5 5"><path d="M5 0v5H0z" fill="#000"/></svg>
<svg style="left:76px;top:508px" width="20" height="20" viewBox="0 0 20 20"><rect x="3.5" y="5.5" width="13" height="9" fill="#C0C0C0" stroke="#404040"/><rect x="8" y="8" width="4" height="4" fill="#fff" stroke="#303030" stroke-width="0.8"/></svg>
<svg style="left:91px;top:525px" width="5" height="5" viewBox="0 0 5 5"><path d="M5 0v5H0z" fill="#000"/></svg>
<svg style="left:50px;top:539px" width="20" height="20" viewBox="0 0 20 20"><path d="M5 11V6q1-2 2 0v4V4q1-2 2 0v6V4q1-2 2 0v6V5q1-2 2 0v7l2-2q2 0 1 2l-4 5H8z" fill="#F4F4F4" stroke="#303030"/></svg>
<svg style="left:65px;top:555px" width="5" height="5" viewBox="0 0 5 5"><path d="M5 0v5H0z" fill="#000"/></svg>
<svg style="left:76px;top:539px" width="20" height="20" viewBox="0 0 20 20"><circle cx="8" cy="8" r="5" fill="#A8D8E8" stroke="#202020" stroke-width="1.8"/><path d="M11.5 11.5l5 5" stroke="#404040" stroke-width="2.5"/></svg>
<div class="a " style="left:48px;top:569px;width:17px;height:24px;border:2px solid #C01010;box-sizing:border-box;background:repeating-conic-gradient(#C0C0C0 0 25%,#fff 0 50%) 0 0/8px 8px"></div>
<div class="a " style="left:65px;top:569px;width:17px;height:24px;border:1px solid #606060;box-sizing:border-box;background:#fff"></div>
<div class="a " style="left:82px;top:569px;width:17px;height:24px;border:1px solid #606060;box-sizing:border-box;background:repeating-conic-gradient(#C8C8C8 0 25%,#fff 0 50%) 0 0/8px 8px"></div>
<div class="a bg" style="left:48px;top:595px;width:50px;height:34px;border:1px solid #8C8A7C;box-sizing:border-box;border-right-color:#fff;border-bottom-color:#fff"></div>
<div class="a " style="left:1179px;top:75px;width:229px;height:371px;background:linear-gradient(90deg,#0831D9,#1656E8 2px,#0A48E0 3px);box-shadow:inset 0 0 0 1px #0026B8;border-radius:2px 2px 0 0"></div>
<div class="a ptl" style="left:1179px;top:75px;width:229px;height:21px;border-radius:2px 2px 0 0"></div>
<div class="a " style="left:1404px;top:75px;width:4px;height:371px;background:linear-gradient(90deg,#0A48E0,#0838D0 2px,#0024A8)"></div>
<div class="a " style="left:1179px;top:442px;width:229px;height:4px;background:linear-gradient(#0A48E0,#0838D0 2px,#0024A8)"></div>
<div class="a pr w" style="left:1183px;top:82px;font-size:13px;line-height:15px;font-weight:bold;text-shadow:1px 1px 0 #0A2A90;-webkit-text-stroke:0.35px #fff">属性</div>
<div class="a bb" style="left:1373px;top:80px;width:13px;height:13px;"><div class="a" style="left:3px;top:8px;width:4px;height:2px;background:#fff"></div></div>
<div class="a bc" style="left:1389px;top:80px;width:13px;height:13px;"><svg style="left:0;top:0" width="11" height="11"><path d="M3.5100000000000002 3.5100000000000002L7.49 7.49M7.49 3.5100000000000002L3.5100000000000002 7.49" stroke="#fff" stroke-width="1.8" stroke-linecap="square"/></svg></div>
<div class="a bg" style="left:1183px;top:96px;width:221px;height:346px;"></div>
<div class="a " style="left:1183px;top:112px;width:221px;height:1px;background:#807C68"></div>
<svg style="left:1183px;top:96px" width="221" height="18" viewBox="0 0 221 18"><path d="M6.5 17V1.5h30l7 7V17" fill="none" stroke="#807C68"/><path d="M43.5 17V1.5h31l16 15.5" fill="none" stroke="#807C68"/><path d="M132.5 17L144 1.5h33.5V17z" fill="#F4F2EA" stroke="#807C68"/><path d="M177.5 9l7-7.5h31.5V17" fill="none" stroke="#807C68"/></svg>
<div class="a " style="left:1316px;top:112px;width:62px;height:1px;background:#F4F2EA"></div>
<div class="a pr " style="left:1192px;top:102px;">选区</div>
<div class="a pr " style="left:1231px;top:102px;">素材</div>
<div class="a pr " style="left:1331px;top:102px;font-weight:bold">图层</div>
<div class="a pr " style="left:1371px;top:102px;">尺子</div>
<div class="a pr " style="left:1212px;top:123px;">类型:</div>
<div class="a pr " style="left:1200px;top:144px;">图层名:</div>
<div class="a pr " style="left:1200px;top:165px;">表现色:</div>
<div class="a pr " style="left:1187px;top:188px;">不透明度:</div>
<div class="a pr " style="left:1187px;top:212px;">显示颜色:</div>
<div class="a pr " style="left:1187px;top:288px;">调板颜色:</div>
<div class="a pr " style="left:1187px;top:314px;">网纸区</div>
<div class="a pr " style="left:1187px;top:341px;">输出原</div>
<div class="a pr " style="left:1199px;top:368px;">辅助</div>
<div class="a pr " style="left:1187px;top:390px;">减色予</div>
<div class="a pr " style="left:1243px;top:123px;">光栅图层</div>
<div class="a " style="left:1243px;top:141px;width:40px;height:16px;background:#fff;border:1px solid #B8B4A0;box-sizing:border-box"></div>
<div class="a pr " style="left:1246px;top:144px;">图层</div>
<div class="a " style="left:1243px;top:162px;width:40px;height:16px;background:#F4F2EA;border:1px solid #B8B4A0;box-sizing:border-box"></div>
<div class="a pr " style="left:1246px;top:165px;">黑白</div>
<div class="a " style="left:1243px;top:185px;width:40px;height:17px;background:#fff;border:1px solid #B8B4A0;box-sizing:border-box"></div>
<div class="a pr " style="left:1245px;top:189px;font-family:Liberation Sans,sans-serif;font-size:11px">100</div>
<svg style="left:1246px;top:210px" width="14" height="14" viewBox="0 0 14 14"><circle cx="7" cy="7" r="6" fill="#F0F0EA" stroke="#3C7A9A"/><circle cx="7" cy="7" r="2.8" fill="#3CA03C"/></svg>
<div class="a pr " style="left:1261px;top:212px;">本</div>
<div class="a " style="left:1260px;top:232px;width:10px;height:13px;background:#4A78D8"></div>
<svg style="left:1245px;top:243px" width="12" height="16" viewBox="0 0 12 16"><path d="M7 2q-5 1-4 6M5 14q5-1 4-6" stroke="#202020" stroke-width="1.5" fill="none"/><path d="M3 10l1 3 3-1M9 6l-1-3-3 1" stroke="#202020" fill="none"/></svg>
<div class="a " style="left:1260px;top:255px;width:10px;height:14px;background:#fff;border:1px solid #B0B0A0;box-sizing:border-box"></div>
<div class="a " style="left:1260px;top:286px;width:30px;height:14px;background:#B8B8B8;border:1px solid #A0A090;box-sizing:border-box"></div>
<div class="a " style="left:1184px;top:413px;width:218px;height:1px;background:#ACA899;border-bottom:1px solid #fff"></div>
<div class="a " style="left:1261px;top:420px;width:64px;height:18px;border:1px solid #003C74;border-radius:3px;box-sizing:border-box;background:linear-gradient(#FFFFFF,#F0F0EA 70%,#D6D0C0)"></div>
<div class="a pr " style="left:1268px;top:424px;">简易显示</div>
<div class="a " style="left:1266px;top:124px;width:154px;height:150px;background:#fff;border:1px solid #000;box-sizing:border-box"></div>
<div class="a " style="left:1267px;top:125px;width:152px;height:14px;background:linear-gradient(#4C94F4,#2A74EC 40%,#1A62E0)"></div>
<div class="a pr " style="left:1278px;top:151px;font-size:18px;line-height:19px;font-weight:bold;letter-spacing:0.5px">素材</div>
<div class="a pr " style="left:1277px;top:189px;font-size:14px;line-height:15px;letter-spacing:0.6px">素材调板显示开
关。可以管理网
纸、对话框尺子等
各类素材。</div>
<div class="a " style="left:1217px;top:297px;width:187px;height:116px;background:linear-gradient(90deg,#0831D9,#1656E8 2px,#0A48E0 3px);box-shadow:inset 0 0 0 1px #0026B8;border-radius:2px 2px 0 0"></div>
<div class="a ptl" style="left:1217px;top:297px;width:187px;height:20px;border-radius:2px 2px 0 0"></div>
<div class="a " style="left:1400px;top:297px;width:4px;height:116px;background:linear-gradient(90deg,#0A48E0,#0838D0 2px,#0024A8)"></div>
<div class="a " style="left:1217px;top:409px;width:187px;height:4px;background:linear-gradient(#0A48E0,#0838D0 2px,#0024A8)"></div>
<div class="a pr w b" style="left:1220px;top:302px;font-size:13px;line-height:15px;font-weight:bold;text-shadow:1px 1px 0 #0A2A90;-webkit-text-stroke:0.35px #fff">3D选择 工具选项</div>
<div class="a bb" style="left:1371px;top:301px;width:13px;height:13px;"><div class="a" style="left:3px;top:8px;width:4px;height:2px;background:#fff"></div></div>
<div class="a bc" style="left:1387px;top:301px;width:13px;height:13px;"><svg style="left:0;top:0" width="11" height="11"><path d="M3.5100000000000002 3.5100000000000002L7.49 7.49M7.49 3.5100000000000002L3.5100000000000002 7.49" stroke="#fff" stroke-width="1.8" stroke-linecap="square"/></svg></div>
<div class="a bg" style="left:1221px;top:317px;width:179px;height:92px;"></div>
<svg style="left:1231px;top:323px" width="13" height="13" viewBox="0 0 13 13"><circle cx="6.5" cy="6.5" r="5.8" fill="#F4F4EE" stroke="#1C5180"/></svg>
<svg style="left:1231px;top:345px" width="13" height="13" viewBox="0 0 13 13"><circle cx="6.5" cy="6.5" r="5.8" fill="#F4F4EE" stroke="#1C5180"/><circle cx="6.5" cy="6.5" r="2.6" fill="#30A030"/></svg>
<svg style="left:1231px;top:368px" width="13" height="13" viewBox="0 0 13 13"><circle cx="6.5" cy="6.5" r="5.8" fill="#F4F4EE" stroke="#1C5180"/></svg>
<div class="a pr " style="left:1247px;top:325px;">移动</div>
<div class="a pr " style="left:1247px;top:347px;">旋转</div>
<div class="a pr " style="left:1247px;top:370px;">缩放</div>
<svg style="left:1231px;top:389px" width="13" height="13" viewBox="0 0 13 13"><rect x="0.5" y="0.5" width="12" height="12" fill="#F4F4EE" stroke="#1C5180"/><path d="M3 6.5l2.5 2.5 4.5-5" stroke="#21A121" stroke-width="2" fill="none"/></svg>
<div class="a pr " style="left:1247px;top:391px;">显示3D控制器</div>
<div class="a " style="left:1250px;top:446px;width:218px;height:510px;background:linear-gradient(90deg,#0831D9,#1656E8 2px,#0A48E0 3px);box-shadow:inset 0 0 0 1px #0026B8;border-radius:2px 2px 0 0"></div>
<div class="a ptl" style="left:1250px;top:446px;width:218px;height:22px;border-radius:2px 2px 0 0"></div>
<div class="a " style="left:1464px;top:446px;width:4px;height:510px;background:linear-gradient(90deg,#0A48E0,#0838D0 2px,#0024A8)"></div>
<div class="a " style="left:1250px;top:952px;width:218px;height:4px;background:linear-gradient(#0A48E0,#0838D0 2px,#0024A8)"></div>
<div class="a pr w" style="left:1254px;top:453px;font-size:13px;line-height:15px;font-weight:bold;text-shadow:1px 1px 0 #0A2A90;-webkit-text-stroke:0.35px #fff">图层</div>
<div class="a bb" style="left:1433px;top:452px;width:13px;height:13px;"><div class="a" style="left:3px;top:8px;width:4px;height:2px;background:#fff"></div></div>
<div class="a bc" style="left:1449px;top:452px;width:13px;height:13px;"><svg style="left:0;top:0" width="11" height="11"><path d="M3.5100000000000002 3.5100000000000002L7.49 7.49M7.49 3.5100000000000002L3.5100000000000002 7.49" stroke="#fff" stroke-width="1.8" stroke-linecap="square"/></svg></div>
<div class="a bg" style="left:1254px;top:468px;width:210px;height:484px;"></div>
<svg style="left:1258px;top:473px" width="16" height="14" viewBox="0 0 16 14"><circle cx="3" cy="2.5" r="2.5" fill="#30A8B8"/><circle cx="3" cy="7" r="2.5" fill="#C02030"/><circle cx="3" cy="11.5" r="2.5" fill="#20A040"/><rect x="8" y="0.5" width="4" height="4" fill="#202020"/><rect x="8" y="5" width="4" height="4" fill="#A0A0A0"/><rect x="8" y="9.5" width="4" height="4" fill="#fff"/></svg>
<div class="a " style="left:1278px;top:470px;width:40px;height:18px;background:#fff;border:1px solid #B8B4A0;box-sizing:border-box"></div>
<div class="a pr " style="left:1281px;top:474px;">100 %</div>
<svg style="left:1323px;top:474px" width="8" height="10" viewBox="0 0 8 10"><path d="M1 0l6 5-6 5z" fill="#000"/></svg>
<div class="a " style="left:1338px;top:471px;width:1px;height:17px;background:#C0BCAA;border-right:1px solid #fff"></div>
<div class="a " style="left:1413px;top:471px;width:1px;height:17px;background:#C0BCAA;border-right:1px solid #fff"></div>
<div class="a " style="left:1443px;top:471px;width:1px;height:17px;background:#C0BCAA;border-right:1px solid #fff"></div>
<svg style="left:1343px;top:471px" width="18" height="18" viewBox="0 0 18 18"><rect x="2.5" y="5.5" width="10" height="9" fill="#fff" stroke="#202020" stroke-width="1.3"/><path d="M11 3l3 3-2 2" stroke="#202020" stroke-width="1.5" fill="none"/><circle cx="13" cy="4" r="2" fill="#303030"/></svg>
<svg style="left:1366px;top:471px" width="18" height="18" viewBox="0 0 18 18"><path d="M2.5 5.5h5l1 1.5h7v8h-13z" fill="#F4E890" stroke="#807830" stroke-width="1.2"/></svg>
<svg style="left:1389px;top:471px" width="18" height="18" viewBox="0 0 18 18"><path d="M4 5h10l-1 11H5z" fill="#C8C8C8" stroke="#505050"/><rect x="3" y="3" width="12" height="3" rx="1" fill="#909090" stroke="#505050"/><path d="M7 7v8M9 7v8M11 7v8" stroke="#606060"/></svg>
<svg style="left:1419px;top:471px" width="18" height="18" viewBox="0 0 18 18"><rect x="3.5" y="8.5" width="11" height="7" fill="#E8E8E8" stroke="#303030" stroke-width="1.2"/><path d="M6 8V6q3-5 6 0v2" stroke="#404040" stroke-width="1.3" fill="none"/><path d="M9 10v4" stroke="#202020" stroke-width="2"/></svg>
<svg style="left:1449px;top:472px" width="16" height="16" viewBox="0 0 16 16"><rect x="6.5" y="1.5" width="7" height="12" fill="#fff" stroke="#101010" stroke-width="1.3"/><path d="M8.5 4.5h3M8.5 7.5h3M8.5 10.5h3" stroke="#101010"/><path d="M2 4l4 3.5-4 3.5z" fill="#000"/></svg>
<div class="a " style="left:1254px;top:489px;width:210px;height:1px;background:#807C68"></div>
<div class="a bg" style="left:1256px;top:490px;width:190px;height:440px;"></div>
<div class="a " style="left:1256px;top:491px;width:190px;height:6px;background:#DDD9C8;overflow:hidden"><div class="a b" style="left:30px;top:-6px">图层</div><div class="a" style="left:16px;top:0;width:10px;height:4px;background:#fff;border:1px solid #101010;border-bottom:none"></div><div class="a" style="left:5px;top:3px;width:9px;height:2px;background:#8C8A78"></div></div>
<div class="a " style="left:1256px;top:497px;width:190px;height:8px;background:#ECEAE0;border-top:1px solid #8C8A7C;box-shadow:inset 0 1px 0 #fff;box-sizing:border-box"></div>
<div class="a " style="left:1446px;top:490px;width:18px;height:445px;background:#FBFBF8;border-left:1px solid #E0DED0;box-sizing:border-box"></div>
<div class="a " style="left:1446px;top:491px;width:18px;height:6px;background:#D8E4F8"></div>
<div class="a " style="left:1447px;top:505px;width:16px;height:16px;border:1px solid #E4E2D6;background:#F2F1EC;box-sizing:border-box"></div>
<svg style="left:1447px;top:505px" width="16" height="16" viewBox="0 0 16 16"><path d="M4 10l4-4 4 4" stroke="#D0CEC4" stroke-width="2" fill="none"/></svg>
<div class="a " style="left:1447px;top:916px;width:16px;height:16px;border:1px solid #E4E2D6;background:#F2F1EC;box-sizing:border-box"></div>
<svg style="left:1447px;top:916px" width="16" height="16" viewBox="0 0 16 16"><path d="M4 6l4 4 4-4" stroke="#D0CEC4" stroke-width="2" fill="none"/></svg>
<div class="a " style="left:1256px;top:505px;width:190px;height:14px;background:linear-gradient(#E4E1D0,#D8D4C0);border-bottom:1px solid #8C8A7C;box-sizing:border-box"></div>
<svg style="left:1262px;top:509px" width="9" height="6" viewBox="0 0 9 6"><path d="M0 0h9l-4.5 6z" fill="#8C8A78"/></svg>
<svg style="left:1272px;top:506px" width="11" height="11" viewBox="0 0 11 11"><path d="M0.5 0.5h9v6h-4v4h-5z" fill="#fff" stroke="#101010"/><path d="M5.5 6.5h4l-4 4z" fill="#fff" stroke="#101010"/></svg>
<div class="a pr " style="left:1285px;top:507px;font-weight:bold">图像</div>
<div class="a " style="left:1256px;top:518px;width:190px;height:21px;background:#fff;border-bottom:1px solid #8C8A7C;box-sizing:border-box"></div>
<div class="a " style="left:1298px;top:518px;width:148px;height:20px;background:#9C9CF2"></div>
<div class="a " style="left:1256px;top:518px;width:41px;height:20px;background:#ECE9D8"></div>
<div class="a " style="left:1297px;top:518px;width:1px;height:20px;background:#8C8A7C"></div>
<div class="a " style="left:1258px;top:520px;width:17px;height:16px;background:#C8C8C8;border:1px solid #fff;border-right-color:#A0A0A0;border-bottom-color:#A0A0A0;box-sizing:border-box"></div>
<div class="a " style="left:1278px;top:520px;width:17px;height:16px;background:#C8C8C8;border:1px solid #fff;border-right-color:#A0A0A0;border-bottom-color:#A0A0A0;box-sizing:border-box"></div>
<svg style="left:1259px;top:523px" width="16" height="10" viewBox="0 0 16 10"><path d="M1 5q7-7 14 0q-7 7-14 0z" fill="#fff" stroke="#202020" stroke-width="1.2"/><circle cx="8" cy="5" r="2.6" fill="#202020"/></svg>
<svg style="left:1278px;top:520px" width="17" height="16" viewBox="0 0 17 16"><path d="M3 14l9-9 2 2-9 8z" fill="#fff" stroke="#202020"/><path d="M12 4l2-2 1 1-2 2z" fill="#202020"/></svg>
<div class="a " style="left:1300px;top:520px;width:18px;height:16px;background:#F8F8F8;border:1px solid #fff;box-shadow:0 0 0 1px #C0C0C0;box-sizing:border-box"></div>
<svg style="left:1301px;top:521px" width="16" height="14" viewBox="0 0 16 14"><rect x="2.5" y="3.5" width="11" height="9" fill="#fff" stroke="#8090B0"/></svg>
<div class="a pr " style="left:1324px;top:524px;font-weight:bold;color:#000020">图层</div>
<svg style="left:1432px;top:522px" width="13" height="12" viewBox="0 0 13 12"><rect x="0" y="0" width="13" height="12" fill="#D0D0D0"/><path d="M2 2l4 4-4 4z" fill="#fff"/><path d="M7 2h4M7 5h4M7 8h4" stroke="#fff"/></svg>
<div class="a " style="left:1256px;top:539px;width:190px;height:21px;background:#fff;border-bottom:1px solid #8C8A7C;box-sizing:border-box"></div>
<div class="a " style="left:1256px;top:539px;width:41px;height:20px;background:#ECE9D8"></div>
<div class="a " style="left:1297px;top:539px;width:1px;height:20px;background:#8C8A7C"></div>
<div class="a " style="left:1258px;top:541px;width:17px;height:16px;background:#C8C8C8;border:1px solid #fff;border-right-color:#A0A0A0;border-bottom-color:#A0A0A0;box-sizing:border-box"></div>
<div class="a " style="left:1278px;top:541px;width:17px;height:16px;background:#C8C8C8;border:1px solid #fff;border-right-color:#A0A0A0;border-bottom-color:#A0A0A0;box-sizing:border-box"></div>
<svg style="left:1259px;top:544px" width="16" height="10" viewBox="0 0 16 10"><path d="M1 5q7-7 14 0q-7 7-14 0z" fill="#fff" stroke="#202020" stroke-width="1.2"/><circle cx="8" cy="5" r="2.6" fill="#202020"/></svg>
<div class="a " style="left:1300px;top:541px;width:18px;height:16px;background:#F8F8F8;border:1px solid #fff;box-shadow:0 0 0 1px #C0C0C0;box-sizing:border-box"></div>
<svg style="left:1301px;top:542px" width="16" height="14" viewBox="0 0 16 14"><rect x="1.5" y="3.5" width="13" height="9" fill="#fff" stroke="#C0C0C0"/></svg>
<div class="a pr " style="left:1341px;top:545px;">图层</div>
<svg style="left:1319px;top:541px" width="18" height="17" viewBox="0 0 18 17"><rect x="5.5" y="5.5" width="10" height="10" fill="#fff" stroke="#101010"/><rect x="1.5" y="1.5" width="10" height="10" fill="#4A90E8" stroke="#101010"/></svg>
<svg style="left:1432px;top:543px" width="13" height="12" viewBox="0 0 13 12"><rect x="0" y="0" width="13" height="12" fill="#D0D0D0"/><path d="M2 2l4 4-4 4z" fill="#fff"/><path d="M7 2h4M7 5h4M7 8h4" stroke="#fff"/></svg>
<div class="a " style="left:1256px;top:560px;width:190px;height:14px;background:linear-gradient(#E4E1D0,#D8D4C0);border-bottom:1px solid #8C8A7C;box-sizing:border-box"></div>
<svg style="left:1262px;top:564px" width="9" height="6" viewBox="0 0 9 6"><path d="M0 0h9l-4.5 6z" fill="#8C8A78"/></svg>
<svg style="left:1272px;top:561px" width="11" height="11" viewBox="0 0 11 11"><path d="M0.5 0.5h9v6h-4v4h-5z" fill="#fff" stroke="#101010"/><path d="M5.5 6.5h4l-4 4z" fill="#fff" stroke="#101010"/></svg>
<div class="a pr " style="left:1285px;top:562px;">选区</div>
<svg style="left:1376px;top:563px" width="9" height="9" viewBox="0 0 9 9"><rect x="0.5" y="0.5" width="8" height="8" fill="#C8F4C8" stroke="#0A4A0A"/><path d="M4.5 2l2.5 2.5-2.5 2.5-2.5-2.5z" fill="#0A6A0A"/></svg>
<svg style="left:1350px;top:562px" width="22" height="11" viewBox="0 0 22 11"><path d="M3 9h6V5H5v4M12 3h6v5h-6z" stroke="#D8D4C4" fill="none"/></svg>
<svg style="left:1388px;top:562px" width="10" height="11" viewBox="0 0 10 11"><path d="M2 3l6 6M3 8h5V4" stroke="#D8D4C4" fill="none"/></svg>
<div class="a " style="left:1256px;top:574px;width:190px;height:14px;background:linear-gradient(#E4E1D0,#D8D4C0);border-bottom:1px solid #8C8A7C;box-sizing:border-box"></div>
<svg style="left:1262px;top:578px" width="9" height="6" viewBox="0 0 9 6"><path d="M0 0h9l-4.5 6z" fill="#8C8A78"/></svg>
<svg style="left:1272px;top:575px" width="11" height="11" viewBox="0 0 11 11"><path d="M0.5 0.5h9v6h-4v4h-5z" fill="#40D8E8" stroke="#101010"/><path d="M5.5 6.5h4l-4 4z" fill="#fff" stroke="#101010"/></svg>
<div class="a pr " style="left:1285px;top:576px;">尺子</div>
<div class="a " style="left:1256px;top:588px;width:190px;height:14px;background:linear-gradient(#E4E1D0,#D8D4C0);border-bottom:1px solid #8C8A7C;box-sizing:border-box"></div>
<svg style="left:1262px;top:592px" width="9" height="6" viewBox="0 0 9 6"><path d="M0 0h9l-4.5 6z" fill="#8C8A78"/></svg>
<svg style="left:1272px;top:589px" width="11" height="11" viewBox="0 0 11 11"><path d="M0.5 0.5h10v5h-4v5h-6z" fill="#fff" stroke="#101010"/><path d="M3 3h2M7 3h2M3 7h2" stroke="#2A6AD8" stroke-width="1.5"/></svg>
<div class="a pr " style="left:1285px;top:590px;">参考线</div>
<div class="a " style="left:1256px;top:602px;width:190px;height:14px;background:linear-gradient(#E4E1D0,#D8D4C0);border-bottom:1px solid #8C8A7C;box-sizing:border-box"></div>
<svg style="left:1262px;top:606px" width="9" height="6" viewBox="0 0 9 6"><path d="M0 0h9l-4.5 6z" fill="#7C7A68"/></svg>
<div class="a pr " style="left:1285px;top:604px;">纸张</div>
<div class="a " style="left:1256px;top:616px;width:190px;height:21px;background:#fff;border-bottom:1px solid #8C8A7C;box-sizing:border-box"></div>
<div class="a " style="left:1256px;top:616px;width:41px;height:20px;background:#ECE9D8"></div>
<div class="a " style="left:1297px;top:616px;width:1px;height:20px;background:#8C8A7C"></div>
<div class="a " style="left:1258px;top:618px;width:17px;height:16px;background:#C8C8C8;border:1px solid #fff;border-right-color:#A0A0A0;border-bottom-color:#A0A0A0;box-sizing:border-box"></div>
<div class="a " style="left:1278px;top:618px;width:17px;height:16px;background:#C8C8C8;border:1px solid #fff;border-right-color:#A0A0A0;border-bottom-color:#A0A0A0;box-sizing:border-box"></div>
<svg style="left:1259px;top:621px" width="16" height="10" viewBox="0 0 16 10"><path d="M1 5q7-7 14 0q-7 7-14 0z" fill="#fff" stroke="#202020" stroke-width="1.2"/><circle cx="8" cy="5" r="2.6" fill="#202020"/></svg>
<svg style="left:1278px;top:618px" width="17" height="16" viewBox="0 0 17 16"><rect x="1.5" y="1.5" width="13" height="14" fill="#C8C8C8" stroke="#D03030" stroke-width="1.2"/><path d="M2 2l12 13" stroke="#D03030" stroke-width="1.2"/></svg>
<div class="a " style="left:1300px;top:618px;width:18px;height:16px;background:#F8F8F8;border:1px solid #fff;box-shadow:0 0 0 1px #C0C0C0;box-sizing:border-box"></div>
<svg style="left:1301px;top:619px" width="16" height="14" viewBox="0 0 16 14"><rect x="3.5" y="2.5" width="9" height="10" fill="#C8F0F8" stroke="#60A0C0"/><path d="M1 1l2 2M15 1l-2 2M1 14l2-2M15 14l-2-2" stroke="#204080" stroke-width="1.5"/></svg>
<div class="a pr " style="left:1324px;top:622px;">裁剪线/基本框图层</div>
<svg style="left:1432px;top:620px" width="13" height="12" viewBox="0 0 13 12"><rect x="0" y="0" width="13" height="12" fill="#D0D0D0"/><path d="M2 2l4 4-4 4z" fill="#fff"/><path d="M7 2h4M7 5h4M7 8h4" stroke="#fff"/></svg>
<div class="a " style="left:1256px;top:637px;width:190px;height:21px;background:#fff;border-bottom:1px solid #8C8A7C;box-sizing:border-box"></div>
<div class="a " style="left:1256px;top:637px;width:41px;height:20px;background:#ECE9D8"></div>
<div class="a " style="left:1297px;top:637px;width:1px;height:20px;background:#8C8A7C"></div>
<div class="a " style="left:1258px;top:639px;width:17px;height:16px;background:#C8C8C8;border:1px solid #fff;border-right-color:#A0A0A0;border-bottom-color:#A0A0A0;box-sizing:border-box"></div>
<div class="a " style="left:1278px;top:639px;width:17px;height:16px;background:#C8C8C8;border:1px solid #fff;border-right-color:#A0A0A0;border-bottom-color:#A0A0A0;box-sizing:border-box"></div>
<div class="a " style="left:1300px;top:639px;width:18px;height:16px;background:#F8F8F8;border:1px solid #fff;box-shadow:0 0 0 1px #C0C0C0;box-sizing:border-box"></div>
<svg style="left:1301px;top:640px" width="16" height="14" viewBox="0 0 16 14"><rect x="0" y="0" width="16" height="14" fill="#E8F8F8"/><path d="M4 0v14M12 0v14M0 4h16M0 10h16" stroke="#30B0B0" stroke-width="1.5"/><rect x="4" y="4" width="8" height="6" fill="#B8ECF0"/></svg>
<div class="a pr " style="left:1324px;top:643px;">栅格图层</div>
<svg style="left:1432px;top:641px" width="13" height="12" viewBox="0 0 13 12"><rect x="0" y="0" width="13" height="12" fill="#D0D0D0"/><path d="M2 2l4 4-4 4z" fill="#fff"/><path d="M7 2h4M7 5h4M7 8h4" stroke="#fff"/></svg>
<div class="a " style="left:1256px;top:505px;width:1px;height:153px;background:#8C8A7C"></div>
<div class="a " style="left:1445px;top:505px;width:1px;height:153px;background:#7C7A68"></div>
<div class="a " style="left:1256px;top:505px;width:190px;height:1px;background:#8C8A7C"></div>
<div class="a " style="left:1254px;top:935px;width:210px;height:17px;background:#F5F4EC;border-top:1px solid #fff;box-sizing:border-box"></div>
<div class="a pr " style="left:1257px;top:939px;">光栅图层 600 dpi(黑白(2bit))...</div>
<svg style="left:1452px;top:940px" width="10" height="10" viewBox="0 0 10 10"><rect x="7" y="1" width="2" height="2" fill="#C0BCA8"/><rect x="4" y="4" width="2" height="2" fill="#C0BCA8"/><rect x="7" y="4" width="2" height="2" fill="#C0BCA8"/><rect x="1" y="7" width="2" height="2" fill="#C0BCA8"/><rect x="4" y="7" width="2" height="2" fill="#C0BCA8"/><rect x="7" y="7" width="2" height="2" fill="#C0BCA8"/></svg>
<div class="a " style="left:432px;top:45px;width:344px;height:555px;background:#fff;border:1px solid #ACA899;box-sizing:border-box;box-shadow:none"></div>
<div class="a pr " style="left:452px;top:51px;color:#000;line-height:14px">新建窗口(N)</div>
<div class="a pr " style="left:452px;top:69px;color:#000;line-height:14px">全屏方式(F)</div>
<div class="a " style="left:435px;top:87px;width:338px;height:1px;background:#ACA899;border-bottom:1px solid #fff"></div>
<div class="a pr " style="left:452px;top:96px;color:#000;line-height:14px">复位调板(G)</div>
<svg style="left:762px;top:97px" width="6" height="8" viewBox="0 0 6 8"><path d="M0 0l4 4-4 4z" fill="#000"/></svg>
<div class="a " style="left:435px;top:114px;width:338px;height:1px;background:#ACA899;border-bottom:1px solid #fff"></div>
<div class="a pr " style="left:452px;top:123px;color:#000;line-height:14px">放大(I)</div>
<div class="a pr " style="left:681px;top:123px;color:#000;line-height:14px">=</div>
<div class="a pr " style="left:452px;top:141px;color:#000;line-height:14px">缩小(O)</div>
<div class="a pr " style="left:681px;top:141px;color:#000;line-height:14px">-</div>
<div class="a pr " style="left:452px;top:159px;color:#000;line-height:14px">实际像素(A)</div>
<div class="a pr " style="left:681px;top:159px;color:#000;line-height:14px">Ctrl+Alt+0</div>
<div class="a pr " style="left:452px;top:177px;color:#000;line-height:14px">满画布显示(A)</div>
<div class="a pr " style="left:681px;top:177px;color:#000;line-height:14px">Ctrl+0</div>
<div class="a pr " style="left:452px;top:195px;color:#000;line-height:14px">打印尺寸(R)</div>
<div class="a pr " style="left:681px;top:195px;color:#000;line-height:14px">Ctrl+Shift+0</div>
<div class="a " style="left:435px;top:213px;width:338px;height:1px;background:#ACA899;border-bottom:1px solid #fff"></div>
<div class="a pr " style="left:452px;top:222px;color:#000;line-height:14px">隐藏全部调板(H)</div>
<div class="a pr " style="left:681px;top:222px;color:#000;line-height:14px">Tab</div>
<div class="a " style="left:435px;top:240px;width:338px;height:1px;background:#ACA899;border-bottom:1px solid #fff"></div>
<div class="a pr " style="left:452px;top:249px;color:#000;line-height:14px">新手指南(Y)</div>
<div class="a pr " style="left:681px;top:249px;color:#000;line-height:14px">F10</div>
<div class="a pr " style="left:452px;top:267px;color:#000;line-height:14px">工具栏(L)</div>
<svg style="left:438px;top:269px" width="9" height="9" viewBox="0 0 9 9"><path d="M1 4l2.5 3L8 1.5" stroke="#000" stroke-width="2" fill="none"/></svg>
<div class="a pr " style="left:452px;top:285px;color:#000;line-height:14px">状态栏(S)</div>
<svg style="left:438px;top:287px" width="9" height="9" viewBox="0 0 9 9"><path d="M1 4l2.5 3L8 1.5" stroke="#000" stroke-width="2" fill="none"/></svg>
<div class="a " style="left:435px;top:303px;width:338px;height:1px;background:#ACA899;border-bottom:1px solid #fff"></div>
<div class="a pr " style="left:452px;top:312px;color:#000;line-height:14px">工具(T)</div>
<div class="a pr " style="left:681px;top:312px;color:#000;line-height:14px">F2</div>
<svg style="left:438px;top:314px" width="9" height="9" viewBox="0 0 9 9"><path d="M1 4l2.5 3L8 1.5" stroke="#000" stroke-width="2" fill="none"/></svg>
<div class="a pr " style="left:452px;top:330px;color:#000;line-height:14px">工具选项(P)</div>
<div class="a pr " style="left:681px;top:330px;color:#000;line-height:14px">F3</div>
<svg style="left:438px;top:332px" width="9" height="9" viewBox="0 0 9 9"><path d="M1 4l2.5 3L8 1.5" stroke="#000" stroke-width="2" fill="none"/></svg>
<div class="a pr " style="left:452px;top:348px;color:#000;line-height:14px">图层(A)</div>
<div class="a pr " style="left:681px;top:348px;color:#000;line-height:14px">F4</div>
<svg style="left:438px;top:350px" width="9" height="9" viewBox="0 0 9 9"><path d="M1 4l2.5 3L8 1.5" stroke="#000" stroke-width="2" fill="none"/></svg>
<div class="a pr " style="left:452px;top:366px;color:#000;line-height:14px">导航窗口(G)</div>
<div class="a pr " style="left:681px;top:366px;color:#000;line-height:14px">F5</div>
<div class="a " style="left:435px;top:380px;width:338px;height:18px;background:#316AC5"></div>
<div class="a pr " style="left:452px;top:384px;color:#fff;line-height:14px">素材(M)</div>
<div class="a pr " style="left:681px;top:384px;color:#fff;line-height:14px">F6</div>
<div class="a pr " style="left:452px;top:402px;color:#000;line-height:14px">属性(E)</div>
<div class="a pr " style="left:681px;top:402px;color:#000;line-height:14px">F7</div>
<svg style="left:438px;top:404px" width="9" height="9" viewBox="0 0 9 9"><path d="M1 4l2.5 3L8 1.5" stroke="#000" stroke-width="2" fill="none"/></svg>
<div class="a pr " style="left:452px;top:420px;color:#000;line-height:14px">历史记录(Y)</div>
<div class="a pr " style="left:681px;top:420px;color:#000;line-height:14px">F8</div>
<div class="a pr " style="left:452px;top:438px;color:#000;line-height:14px">颜色(I)</div>
<div class="a pr " style="left:681px;top:438px;color:#000;line-height:14px">F9</div>
<div class="a pr " style="left:452px;top:456px;color:#000;line-height:14px">自定义工具(U)</div>
<div class="a pr " style="left:681px;top:456px;color:#000;line-height:14px">F11</div>
<div class="a pr " style="left:452px;top:474px;color:#000;line-height:14px">动作(N)</div>
<div class="a pr " style="left:681px;top:474px;color:#000;line-height:14px">F12</div>
<div class="a pr " style="left:452px;top:492px;color:#000;line-height:14px">网络(K)</div>
<div class="a " style="left:435px;top:510px;width:338px;height:1px;background:#ACA899;border-bottom:1px solid #fff"></div>
<div class="a pr " style="left:452px;top:519px;color:#000;line-height:14px">重叠显示(C)</div>
<div class="a pr " style="left:452px;top:537px;color:#000;line-height:14px">上下排列显示(V)</div>
<div class="a pr " style="left:452px;top:555px;color:#000;line-height:14px">左右排列显示(H)</div>
<div class="a " style="left:435px;top:573px;width:338px;height:1px;background:#ACA899;border-bottom:1px solid #fff"></div>
<div class="a pr " style="left:452px;top:582px;color:#000;line-height:14px"><u>1</u> [新建页面] (25.70 * 36.40cm 600dpi)</div>
<svg style="left:438px;top:584px" width="9" height="9" viewBox="0 0 9 9"><path d="M1 4l2.5 3L8 1.5" stroke="#000" stroke-width="2" fill="none"/></svg>
</body></html>
